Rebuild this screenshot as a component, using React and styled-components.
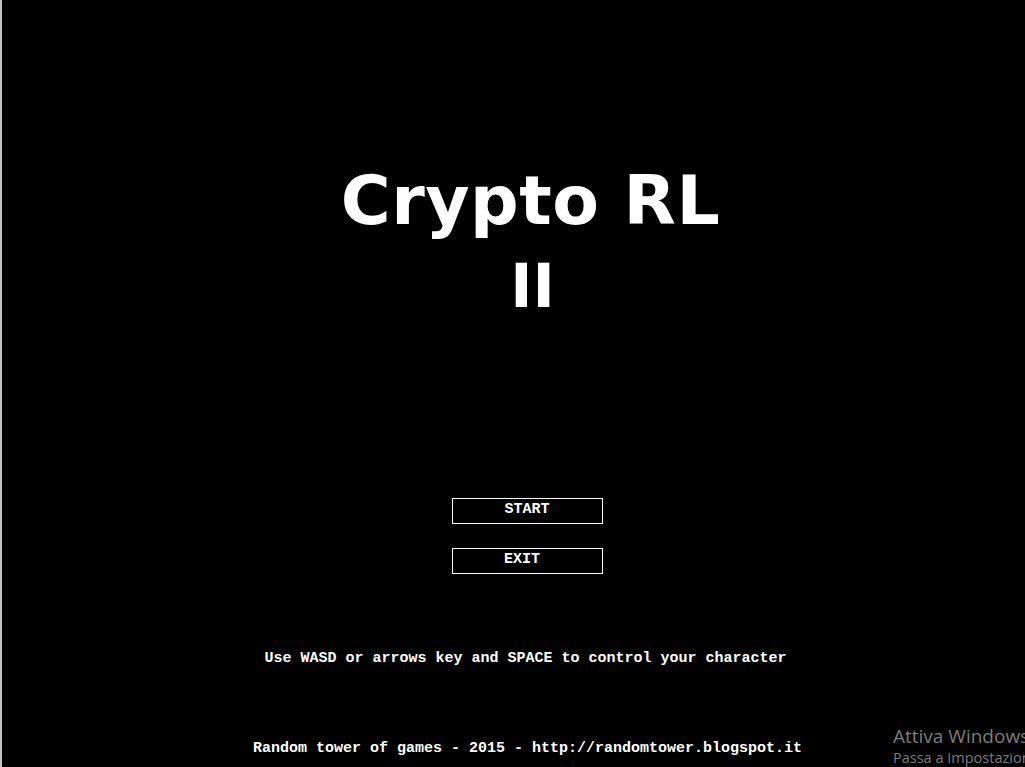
import React from 'react';
import styled, { createGlobalStyle } from 'styled-components';

const GlobalStyle = createGlobalStyle`
  html, body {
    margin: 0;
    padding: 0;
    background: #000;
  }
`;

const Screen = styled.div`
  position: relative;
  width: 1025px;
  height: 767px;
  box-sizing: border-box;
  background: #000;
  border-left: 2px solid #c4c4c4;
  overflow: hidden;
  display: flex;
  flex-direction: column;
  align-items: center;
  padding-left: 24px;
`;

const Title = styled.h1`
  margin: 167px 0 0 10px;
  display: flex;
  flex-direction: column;
  align-items: center;
  font-family: 'DejaVu Sans', sans-serif;
  font-weight: bold;
  color: #fff;
`;

const TitleLine = styled.span`
  font-size: ${(p) => p.size}px;
  line-height: ${(p) => p.size}px;
  letter-spacing: ${(p) => p.spacing || 0}px;
  margin-top: ${(p) => p.gap || 0}px;
  margin-left: ${(p) => p.nudge || 0}px;
`;

const Menu = styled.div`
  margin-top: 182px;
  display: flex;
  flex-direction: column;
  gap: 24px;
  margin-left: 3px;
`;

const MenuButton = styled.button`
  width: 151px;
  height: 26px;
  box-sizing: border-box;
  border: 1px solid #fff;
  background: #000;
  color: #fff;
  font-family: 'Liberation Mono', 'Courier New', monospace;
  font-weight: bold;
  font-size: 15px;
  padding: 0 ${(p) => p.shift || 0}px 3px 0;
  cursor: pointer;
`;

const Hint = styled.p`
  margin: 76px 0 0;
  font-family: 'Liberation Mono', 'Courier New', monospace;
  font-weight: bold;
  font-size: 15px;
  color: #fff;
  white-space: pre;
`;

const Footer = styled.p`
  margin: 73px 0 0 4px;
  font-family: 'Liberation Mono', 'Courier New', monospace;
  font-weight: bold;
  font-size: 15px;
  color: #fff;
  white-space: pre;
`;

const Watermark = styled.div`
  position: absolute;
  left: 891px;
  top: 723px;
  font-family: 'Open Sans', 'Noto Sans', sans-serif;
  color: #7c7c7c;
  white-space: nowrap;
`;

const WatermarkTitle = styled.div`
  font-size: 19px;
  line-height: 26px;
`;

const WatermarkSub = styled.div`
  font-size: 14.5px;
  line-height: 18px;
`;

export default function App() {
  return (
    <>
      <GlobalStyle />
      <Screen>
        <Title>
          <TitleLine size={68} spacing={0.5}>Crypto RL</TitleLine>
          <TitleLine size={60} gap={21} nudge={4}>II</TitleLine>
        </Title>
        <Menu>
          <MenuButton>START</MenuButton>
          <MenuButton shift={10}>EXIT</MenuButton>
        </Menu>
        <Hint>Use WASD or arrows key and SPACE to control your character</Hint>
        <Footer>Random tower of games - 2015 - http://randomtower.blogspot.it</Footer>
        <Watermark>
          <WatermarkTitle>Attiva Windows</WatermarkTitle>
          <WatermarkSub>Passa a Impostazioni</WatermarkSub>
        </Watermark>
      </Screen>
    </>
  );
}
